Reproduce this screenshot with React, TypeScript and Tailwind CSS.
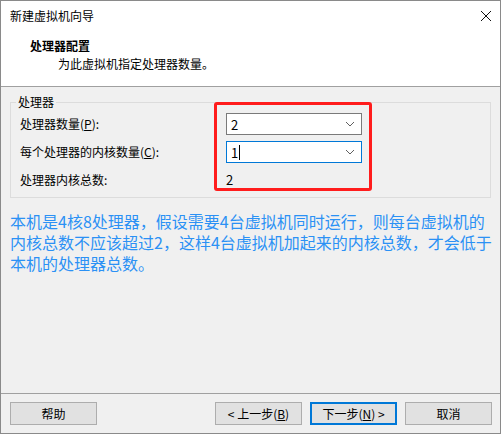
import React from "react";

const font = { fontFamily: '"Noto Sans CJK SC", "Noto Sans", sans-serif' };

const Chevron = () => (
  <svg width="10" height="6" viewBox="0 0 10 6" className="text-[#606060]">
    <path d="M1 1 L5 5 L9 1" fill="none" stroke="currentColor" strokeWidth="1" />
  </svg>
);

type ComboProps = { value: string; focused?: boolean };

const Combo = ({ value, focused }: ComboProps) => (
  <div
    className={`w-[136px] h-[22px] bg-white border flex items-center justify-between pl-[4px] pr-[6px] ${
      focused ? "border-[#0078d7]" : "border-[#7a7a7a]"
    }`}
  >
    <span className="flex items-center text-[13px] leading-none text-black">
      {value}
      {focused && <span className="ml-[1px] w-[1px] h-[15px] bg-black" />}
    </span>
    <Chevron />
  </div>
);

const Btn = ({ children, primary }: { children: React.ReactNode; primary?: boolean }) => (
  <button
    className={`w-[87px] h-[23px] bg-[#e1e1e1] text-[12px] leading-none text-black flex items-center justify-center ${
      primary ? "border-2 border-[#0078d7]" : "border border-[#adadad]"
    }`}
  >
    {children}
  </button>
);

export default function App() {
  return (
    <div style={font} className="w-[501px] h-[434px] bg-white border border-[#8a8a8a] flex flex-col text-[12px] text-black">
      {/* title bar */}
      <div className="h-[29px] flex items-center justify-between pl-[9px] pr-[8px]">
        <span className="leading-4">新建虚拟机向导</span>
        <svg width="12" height="12" viewBox="0 0 12 12">
          <path d="M1 1 L11 11 M11 1 L1 11" stroke="#111" strokeWidth="1" />
        </svg>
      </div>

      {/* header */}
      <div className="h-[57px] border-b border-[#a0a0a0] pt-[8px]">
        <div className="pl-[29px] font-bold leading-4">处理器配置</div>
        <div className="pl-[57px] mt-[2px] leading-4">为此虚拟机指定处理器数量。</div>
      </div>

      {/* body */}
      <div className="flex-1 bg-[#f0f0f0] border-b border-[#a0a0a0] relative">
        <fieldset className="mx-[9px] mt-[7px] border border-[#dcdcdc] px-[5px] pb-[6px]">
          <legend className="px-[2px] leading-4">处理器</legend>
          <div className="flex flex-col gap-[6px] pl-[4px] mt-[3px]">
            <div className="h-[22px] flex items-center">
              <span className="w-[206px]">
                处理器数量(<span className="underline">P</span>):
              </span>
              <Combo value="2" />
            </div>
            <div className="h-[22px] flex items-center">
              <span className="w-[206px]">
                每个处理器的内核数量(<span className="underline">C</span>):
              </span>
              <Combo value="1" focused />
            </div>
            <div className="h-[22px] flex items-center">
              <span className="w-[206px]">处理器内核总数:</span>
              <span className="text-[13px]">2</span>
            </div>
          </div>
        </fieldset>

        {/* annotation box */}
        <div className="absolute left-[213px] top-[15px] w-[158px] h-[89px] border-[3px] border-[#ff1c1c] rounded-[3px]" />

        <p className="mt-[13px] pl-[9px] text-[16px] leading-[21px] text-[#2b91f5] whitespace-nowrap">
          本机是4核8处理器，假设需要4台虚拟机同时运行，则每台虚拟机的
          <br />
          内核总数不应该超过2，这样4台虚拟机加起来的内核总数，才会低于
          <br />
          本机的处理器总数。
        </p>
      </div>

      {/* footer */}
      <div className="h-[39px] bg-[#f0f0f0] flex pt-[8px] pl-[9px] pr-[8px]">
        <Btn>帮助</Btn>
        <div className="flex-1" />
        <div className="flex gap-[8px]">
          <Btn>
            &lt; 上一步(<span className="underline">B</span>)
          </Btn>
          <Btn primary>
            下一步(<span className="underline">N</span>) &gt;
          </Btn>
          <Btn>取消</Btn>
        </div>
      </div>
    </div>
  );
}
